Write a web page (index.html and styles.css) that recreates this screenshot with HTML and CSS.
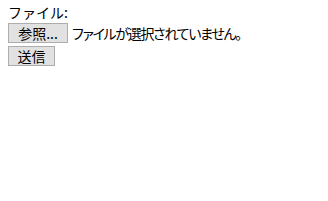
FILE: index.html
```html
<!DOCTYPE html>
<html lang="ja">
<head>
    <meta charset="UTF-8">
    <title>アップロード</title>
    <link rel="stylesheet" href="styles.css">
</head>
<body>
    <form class="upload-form">
        <div class="field-label">ファイル:</div>
        <div class="file-row">
            <button type="button" class="btn">参照...</button>
            <span class="file-name">ファイルが選択されていません。</span>
        </div>
        <div class="submit-row">
            <button type="submit" class="btn">送信</button>
        </div>
    </form>
</body>
</html>
```

FILE: styles.css
```css
body {
    margin: 0;
    padding: 4px 8px;
    font-family: "Noto Sans CJK JP", "Liberation Sans", sans-serif;
    font-size: 14px;
    color: #000;
    background-color: #fff;
}

.field-label {
    line-height: 17px;
    height: 19px;
}

.file-row {
    display: flex;
    align-items: center;
    gap: 4px;
    margin-bottom: 3px;
}

.btn {
    font-family: "Noto Sans CJK JP", "Liberation Sans", sans-serif;
    font-size: 14px;
    font-feature-settings: "palt";
    line-height: 16px;
    width: 60px;
    height: 20px;
    padding: 0;
    margin: 0;
    color: #000;
    background-color: #e1e1e1;
    border: 1px solid #adadad;
    border-radius: 0;
}

.submit-row .btn {
    width: 47px;
}

.file-name {
    line-height: 17px;
    font-feature-settings: "palt";
    letter-spacing: -1.3px;
}
```
